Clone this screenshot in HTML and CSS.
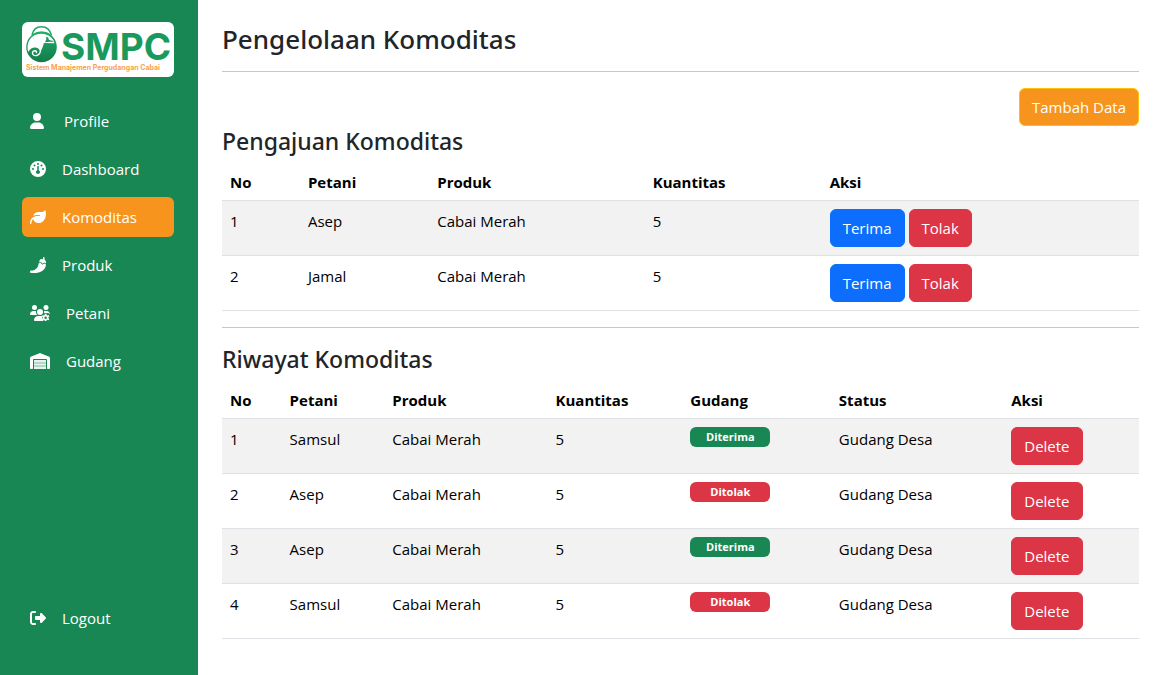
FILE: index.html
```html
<!DOCTYPE html>
<html lang="id">
<head>
<meta charset="utf-8">
<meta name="viewport" content="width=device-width, initial-scale=1">
<title>SMPC - Pengelolaan Komoditas</title>
<link rel="stylesheet" href="styles.css">
</head>
<body>
<div class="layout">
  <aside class="sidebar">
    <a class="logo" href="#" aria-label="SMPC">
      <svg viewBox="0 0 152 55">
        <defs>
          <linearGradient id="leaf" x1="0" y1="0" x2="0" y2="1">
            <stop offset="0" stop-color="#1fb068"/>
            <stop offset="1" stop-color="#147a4a"/>
          </linearGradient>
        </defs>
        <path d="M10 13.500C11 7.500 15 4.700 19.500 4.700S28 7.500 29.500 13.500" fill="none" stroke="#1fa865" stroke-width="1.600"/>
        <path d="M11 13.500C14 9 25 9 28 13.500" fill="none" stroke="#1fa865" stroke-width="1.400"/>
        <circle cx="19.500" cy="25" r="15.300" fill="url(#leaf)"/>
        <path d="M29 15.500C24 10.500 15 10.800 10 15C5.300 19 4.800 25.500 6.300 30C8 27 10.500 25.500 13 25.600C16 25.700 18 27.500 17.800 30C20.500 27.500 21 23.500 22 21L32.500 21.200C32 19 31 17 29 15.500Z" fill="#fff"/>
        <path d="M18.500 29C18 33 14 34.500 11.500 33C9.500 31.500 10.500 28.800 13 28.800C14.500 28.800 15 30.300 14 31" fill="none" stroke="#fff" stroke-width="1.400"/>
        <path d="M24 14.800L26.300 15.500C26.300 17 26.800 18 28 18.200C30 18.300 31.500 19 32 20.300C29 19.500 26 20 23 20.200C23.300 18.800 25 18 24 14.800Z" fill="#199a5c"/>
        <text class="logo-name" x="39" y="38">SMPC</text>
        <text class="logo-tagline" x="4" y="48">Sistem Manajemen Pergudangan Cabai</text>
      </svg>
    </a>
    <nav class="menu">
      <a class="menu-item" href="#">
        <svg class="icon icon-mid" viewBox="0 0 448 512" preserveAspectRatio="xMinYMid meet"><path d="M224 256A128 128 0 1 0 224 0a128 128 0 1 0 0 256zm-45.700 48C79.800 304 0 383.800 0 482.300C0 498.700 13.300 512 29.700 512H418.300c16.400 0 29.700-13.300 29.700-29.700C448 383.800 368.200 304 269.700 304H178.300z"/></svg>
        Profile
      </a>
      <a class="menu-item" href="#">
        <svg class="icon" viewBox="0 0 512 512"><path fill-rule="evenodd" d="M0 256a256 256 0 1 1 512 0A256 256 0 1 1 0 256zM288 96a32 32 0 1 0-64 0 32 32 0 1 0 64 0zM256 416c35.300 0 64-28.700 64-64c0-26-16-49-40-59V160h-48V293c-24 10-40 33-40 59c0 35.300 28.700 64 64 64zM176 144a32 32 0 1 0-64 0 32 32 0 1 0 64 0zM96 288a32 32 0 1 0 0-64 32 32 0 1 0 0 64zm352-32a32 32 0 1 0-64 0 32 32 0 1 0 64 0zM368 176a32 32 0 1 0 0-64 32 32 0 1 0 0 64z"/></svg>
        Dashboard
      </a>
      <a class="menu-item active" href="#" aria-current="page">
        <svg class="icon" viewBox="0 0 512 512"><path d="M272 96c-78.600 0-145.100 51.500-167.700 122.500c33.600-17 71.500-26.500 111.700-26.500h88c8.800 0 16 7.200 16 16s-7.200 16-16 16H216c-16.600 0-32.700 1.900-48.300 5.400c-25.900 5.900-49.900 16.400-71.400 30.700C38.300 298.800 0 364.900 0 440v16c0 13.300 10.700 24 24 24s24-10.700 24-24V440c0-48.700 20.700-92.500 53.800-123.200C121.600 392.300 190.300 448 272 448l1 0c132.100-.7 239-130.900 239-291.400c0-42.600-7.500-83.100-21.100-119.600c-2.600-6.900-12.700-6.600-16.200-.1C455.900 72.100 418.700 96 376 96L272 96z"/></svg>
        Komoditas
      </a>
      <a class="menu-item" href="#">
        <svg class="icon" viewBox="0 0 512 512"><path d="M428 3c12-6 26-2 32 9c12 24 14 51 6 76c28 14 46 43 46 76v42l-60-30-50 36-40-48-62 8v-30c0-40 30-72 68-78l48 4c10-12 12-26 5-38c-6-10-3-21 7-27z"/><path d="M276 196l72-8 46 60 60-40 58 30C506 400 350 512 120 512H40c-22 0-40-18-40-40s18-40 40-40c120 0 225-80 236-236z"/></svg>
        Produk
      </a>
      <a class="menu-item" href="#">
        <svg class="icon icon-wide" viewBox="0 0 640 512"><circle cx="144" cy="80" r="80"/><circle cx="512" cy="80" r="80"/><circle cx="320" cy="224" r="96"/><path d="M0 299c0-59 48-107 107-107h42c16 0 31 4 45 10c-10 48 6 89 41 118H21c-12 0-21-9-21-21zM446 202c14-6 30-10 46-10h42c58 0 104 46 106 103c-36-36-78-46-120-28c-22-16-46-10-73-2c5-20 5-42-1-63zM128 485c0-73 60-133 133-133h98c12 0 24 2 35 5c-14 56 4 112 50 155H155c-15 0-27-12-27-27z"/><path fill-rule="evenodd" d="M475 282h50l8 40 22 13 39-13 25 43-31 27v26l31 27-25 43-39-13-22 13-8 24h-50l-8-24-22-13-39 13-25-43 31-27v-26l-31-27 25-43 39 13 22-13zM500 364a41 41 0 1 0 0 82 41 41 0 1 0 0-82z"/></svg>
        Petani
      </a>
      <a class="menu-item" href="#">
        <svg class="icon icon-wide" viewBox="0 0 640 512"><path d="M0 488V171.300c0-26.200 15.900-49.700 40.200-59.400L308.100 4.800c7.600-3.100 16.100-3.100 23.800 0L599.800 111.900c24.300 9.700 40.200 33.300 40.200 59.400V488c0 13.300-10.700 24-24 24H568c-13.300 0-24-10.700-24-24V224c0-17.700-14.300-32-32-32H128c-17.700 0-32 14.300-32 32V488c0 13.300-10.700 24-24 24H24c-13.300 0-24-10.700-24-24z"/><path opacity=".9" d="M128 224H512V312H128zM128 326H512V410H128zM128 424H512V512H128z"/></svg>
        Gudang
      </a>
    </nav>
    <a class="menu-item logout" href="#">
      <svg class="icon" viewBox="0 0 512 512"><path d="M377.900 105.900L500.700 228.700c7.200 7.200 11.300 17.100 11.300 27.300s-4.100 20.100-11.300 27.300L377.900 406.100c-6.400 6.400-15 9.900-24 9.900c-18.700 0-33.900-15.200-33.900-33.900l0-62.100-128 0c-17.700 0-32-14.300-32-32l0-64c0-17.700 14.300-32 32-32l128 0 0-62.100c0-18.700 15.200-33.900 33.900-33.900c9 0 17.600 3.600 24 9.900zM160 96L96 96c-17.700 0-32 14.300-32 32l0 256c0 17.700 14.300 32 32 32l64 0c17.700 0 32 14.300 32 32s-14.300 32-32 32l-64 0c-53 0-96-43-96-96L0 128C0 75 43 32 96 32l64 0c17.700 0 32 14.300 32 32s-14.300 32-32 32z"/></svg>
      Logout
    </a>
  </aside>

  <main class="content">
    <h1>Pengelolaan Komoditas</h1>
    <hr>
    <div class="toolbar">
      <button class="btn btn-add" type="button">Tambah Data</button>
    </div>

    <h2 id="pengajuan">Pengajuan Komoditas</h2>
    <table class="table requests" aria-labelledby="pengajuan">
      <colgroup><col class="r-no"><col class="r-petani"><col class="r-produk"><col class="r-kuantitas"><col></colgroup>
      <thead>
        <tr><th>No</th><th>Petani</th><th>Produk</th><th>Kuantitas</th><th>Aksi</th></tr>
      </thead>
      <tbody>
        <tr>
          <td>1</td><td>Asep</td><td>Cabai Merah</td><td>5</td>
          <td><div class="actions"><button class="btn btn-primary" type="button">Terima</button><button class="btn btn-danger" type="button">Tolak</button></div></td>
        </tr>
        <tr>
          <td>2</td><td>Jamal</td><td>Cabai Merah</td><td>5</td>
          <td><div class="actions"><button class="btn btn-primary" type="button">Terima</button><button class="btn btn-danger" type="button">Tolak</button></div></td>
        </tr>
      </tbody>
    </table>
    <hr>

    <h2 id="riwayat">Riwayat Komoditas</h2>
    <table class="table history" aria-labelledby="riwayat">
      <colgroup><col class="h-no"><col class="h-petani"><col class="h-produk"><col class="h-kuantitas"><col class="h-gudang"><col class="h-status"><col></colgroup>
      <thead>
        <tr><th>No</th><th>Petani</th><th>Produk</th><th>Kuantitas</th><th>Gudang</th><th>Status</th><th>Aksi</th></tr>
      </thead>
      <tbody>
        <tr>
          <td>1</td><td>Samsul</td><td>Cabai Merah</td><td>5</td>
          <td><span class="badge accepted">Diterima</span></td><td>Gudang Desa</td>
          <td><div class="actions"><button class="btn btn-danger" type="button">Delete</button></div></td>
        </tr>
        <tr>
          <td>2</td><td>Asep</td><td>Cabai Merah</td><td>5</td>
          <td><span class="badge rejected">Ditolak</span></td><td>Gudang Desa</td>
          <td><div class="actions"><button class="btn btn-danger" type="button">Delete</button></div></td>
        </tr>
        <tr>
          <td>3</td><td>Asep</td><td>Cabai Merah</td><td>5</td>
          <td><span class="badge accepted">Diterima</span></td><td>Gudang Desa</td>
          <td><div class="actions"><button class="btn btn-danger" type="button">Delete</button></div></td>
        </tr>
        <tr>
          <td>4</td><td>Samsul</td><td>Cabai Merah</td><td>5</td>
          <td><span class="badge rejected">Ditolak</span></td><td>Gudang Desa</td>
          <td><div class="actions"><button class="btn btn-danger" type="button">Delete</button></div></td>
        </tr>
      </tbody>
    </table>
  </main>
</div>
</body>
</html>
```
FILE: styles.css
```css
*,
*::before,
*::after {
  box-sizing: border-box;
}

body {
  margin: 0;
  font-family: "Segoe UI", "Open Sans", "Noto Sans", sans-serif;
  font-size: 15px;
  line-height: 24px;
  color: #212529;
  background: #fff;
}

.layout {
  display: flex;
  min-height: 100vh;
}

/* Sidebar */
.sidebar {
  display: flex;
  flex-direction: column;
  flex: 0 0 198px;
  padding: 22px 24px 37px 22px;
  background: #198754;
}

.logo {
  display: block;
  margin-bottom: 24px;
  border-radius: 6px;
  background: #fff;
}

.logo svg {
  display: block;
  width: 100%;
}

.logo-name {
  font-family: Inter, sans-serif;
  font-size: 37px;
  font-weight: 700;
  fill: #199a5c;
}

.logo-tagline {
  font-family: Inter, sans-serif;
  font-size: 7px;
  font-weight: 700;
  fill: #f9a24b;
}

.menu {
  display: flex;
  flex-direction: column;
  gap: 8px;
}

.menu-item {
  display: flex;
  align-items: center;
  gap: 16px;
  padding: 8px;
  border-radius: 6px;
  color: #fff;
  text-decoration: none;
}

.menu-item.active {
  background: #f7941d;
}

.logout {
  margin-top: auto;
}

.icon {
  flex: none;
  width: 16px;
  height: 16px;
  fill: currentColor;
}

.icon-mid {
  width: 18px;
}

.icon-wide {
  width: 20px;
}

/* Content */
.content {
  flex: 1;
  min-width: 0;
  padding: 24px 22px 24px 24px;
}

h1,
h2 {
  margin: 0;
  font-family: "Segoe UI", "Noto Sans", "Open Sans", sans-serif;
  font-weight: 500;
}

h1 {
  font-size: 26px;
  line-height: 31px;
}

h2 {
  margin-bottom: 4px;
  font-size: 23px;
  line-height: 30px;
}

hr {
  height: 1px;
  margin: 16px 0;
  border: 0;
  background: #c7c8c9;
}

.toolbar {
  display: flex;
  justify-content: flex-end;
}

.btn {
  padding: 6px 12px;
  border: 1px solid transparent;
  border-radius: 6px;
  font: inherit;
  color: #fff;
  cursor: pointer;
}

.btn-add {
  border-color: #ffc107;
  background: #f7941d;
}

.btn-primary {
  border-color: #0d6efd;
  background: #0d6efd;
}

.btn-danger {
  border-color: #dc3545;
  background: #dc3545;
}

.actions {
  display: flex;
  gap: 4px;
}

/* Tables */
.table {
  width: 100%;
  table-layout: fixed;
  border-collapse: separate;
  border-spacing: 0;
  color: #000;
}

.table th,
.table td {
  padding: 8px;
  border-bottom: 1px solid #dee2e6;
  text-align: left;
  vertical-align: top;
}

.table th {
  padding: 10px 8px 6px;
  font-weight: 700;
}

.table tbody tr:nth-child(odd) {
  background: #f2f2f2;
}

.r-no { width: 8.5%; }
.r-petani { width: 14.1%; }
.r-produk { width: 23.5%; }
.r-kuantitas { width: 19.3%; }

.h-no { width: 6.5%; }
.h-petani { width: 11.2%; }
.h-produk { width: 17.8%; }
.h-kuantitas { width: 14.7%; }
.h-gudang { width: 16.2%; }
.h-status { width: 18.8%; }

.badge {
  display: block;
  width: 80px;
  border-radius: 6px;
  font-size: 11px;
  font-weight: 700;
  line-height: 20px;
  text-align: center;
  color: #fff;
}

.accepted {
  background: #198754;
}

.rejected {
  background: #dc3545;
}
```
